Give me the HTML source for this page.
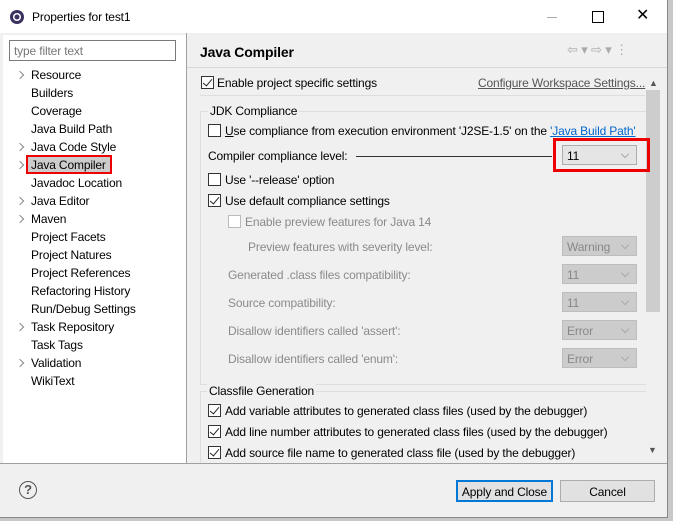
<!DOCTYPE html><html><head><style>
body{margin:0;width:673px;height:521px;background:#c8c8c8;font-family:"Liberation Sans",sans-serif;font-size:12px;letter-spacing:-0.15px;color:#000;position:relative;overflow:hidden}
.win{position:absolute;left:0;top:0;width:667px;height:517px;background:#f0f0f0;border-right:1px solid #888;border-bottom:1px solid #888}
.a{position:absolute;white-space:nowrap}
.tb{position:absolute;left:0;top:0;width:667px;height:33px;background:#fff}
.left{position:absolute;left:3px;top:35px;width:183px;height:428px;background:#fff}
.cb{position:absolute;width:11px;height:11px;border:1px solid #333;background:#fff}
.cb.c::after{content:"";position:absolute;left:3px;top:0px;width:4px;height:8px;border:solid #222;border-width:0 1.5px 1.5px 0;transform:rotate(40deg)}
.cb.d{border-color:#bbb}
.g{color:#8a8a8a}
.sel{position:absolute;width:72px;height:20px;background:#ccc;border:1px solid #bdbdbd;color:#888;box-sizing:border-box;padding:3px 0 0 4px}
.sel::after{content:"";position:absolute;right:8px;top:5px;width:5px;height:5px;border:solid #aaa;border-width:0 1px 1px 0;transform:rotate(45deg)}
.arr{position:absolute;left:17px;width:5px;height:5px;border:solid #888;border-width:1.5px 1.5px 0 0;transform:rotate(45deg)}
.btn{position:absolute;top:480px;height:22px;background:#e1e1e1;border:1px solid #adadad;box-sizing:border-box;text-align:center;padding-top:4px}
</style></head><body><div class="win">
<div class="tb"></div>
<svg class="a" style="left:9px;top:9px" width="16" height="16"><circle cx="8" cy="8" r="7" fill="#3a3160"/><circle cx="8" cy="8" r="4" fill="#fff"/><circle cx="8" cy="8" r="2.5" fill="#3a3160"/></svg>
<div class="a" style="left:32px;top:10px">Properties for test1</div>
<div class="a" style="left:547px;top:17px;width:10px;height:1px;background:#aaa"></div>
<div class="a" style="left:592px;top:11px;width:10px;height:10px;border:1px solid #000"></div>
<div class="a" style="left:636px;top:5px;font-size:16px">✕</div>
<div class="left"></div>
<div class="a" style="left:186px;top:33px;width:1px;height:431px;background:#a0a0a0"></div>
<div class="a" style="left:9px;top:40px;width:165px;height:19px;border:1px solid #7a7a7a;background:#fff"></div>
<div class="a g" style="left:14px;top:44px;color:#777">type filter text</div>
<div class="arr" style="top:72px"></div><div class="arr" style="top:144px"></div><div class="arr" style="top:162px"></div><div class="arr" style="top:198px"></div><div class="arr" style="top:216px"></div><div class="arr" style="top:324px"></div><div class="arr" style="top:360px"></div>
<div class="a" style="left:26px;top:155px;width:86px;height:19px;background:#ccc;border:2px solid #e00;box-sizing:border-box"></div>
<div class="a" style="left:31px;top:66px;line-height:18px">Resource<br>Builders<br>Coverage<br>Java Build Path<br>Java Code Style<br>Java Compiler<br>Javadoc Location<br>Java Editor<br>Maven<br>Project Facets<br>Project Natures<br>Project References<br>Refactoring History<br>Run/Debug Settings<br>Task Repository<br>Task Tags<br>Validation<br>WikiText</div>
<div class="a" style="left:200px;top:44px;font-size:14px;font-weight:bold">Java Compiler</div>
<div class="a" style="left:567px;top:42px;color:#aaa;font-size:13px">⇦ ▾ ⇨ ▾ ⋮</div>
<div class="a" style="left:187px;top:67px;width:480px;height:1px;background:#d8d8d8"></div>
<div class="cb c" style="left:201px;top:76px"></div>
<div class="a" style="left:217px;top:76px">Enable project specific settings</div>
<div class="a" style="left:478px;top:76px;color:#555;text-decoration:underline">Configure Workspace Settings...</div>
<div class="a" style="left:649px;top:78px;font-size:9px;color:#555">▲</div>
<div class="a" style="left:646px;top:90px;width:14px;height:222px;background:#cdcdcd"></div>
<div class="a" style="left:648px;top:445px;font-size:9px;color:#555">▼</div>
<div class="a" style="left:200px;top:95px;width:445px;height:1px;background:#ddd"></div>
<div class="a" style="left:200px;top:111px;width:445px;height:272px;border:1px solid #ddd;border-right:none"></div>
<div class="a" style="left:208px;top:104px;background:#f0f0f0;padding:0 2px">JDK Compliance</div>
<div class="cb" style="left:208px;top:124px"></div>
<div class="a" style="left:225px;top:124px"><u>U</u>se compliance from execution environment 'J2SE-1.5' on the <span style="color:#06c;text-decoration:underline">'Java Build Path'</span></div>
<div class="a" style="left:208px;top:149px">Compiler compliance level:</div>
<div class="a" style="left:356px;top:156px;width:196px;height:1px;background:#333"></div>
<div class="a" style="left:553px;top:138px;width:97px;height:34px;border:3px solid #e00;box-sizing:border-box"></div>
<div class="sel" style="left:562px;top:145px;width:75px;color:#000;background:#e5e5e5;border-color:#adadad">11</div>
<div class="cb" style="left:208px;top:173px"></div><div class="a" style="left:225px;top:173px">Use '--release' option</div>
<div class="cb c" style="left:208px;top:194px"></div><div class="a" style="left:225px;top:194px">Use default compliance settings</div>
<div class="cb d" style="left:228px;top:215px"></div><div class="a g" style="left:245px;top:215px">Enable preview features for Java 14</div>
<div class="a g" style="left:248px;top:240px">Preview features with severity level:</div>
<div class="a g" style="left:228px;top:268px">Generated .class files compatibility:</div>
<div class="a g" style="left:228px;top:296px">Source compatibility:</div>
<div class="a g" style="left:228px;top:324px">Disallow identifiers called 'assert':</div>
<div class="a g" style="left:228px;top:352px">Disallow identifiers called 'enum':</div>
<div class="sel" style="left:562px;top:236px;width:75px">Warning</div>
<div class="sel" style="left:562px;top:264px;width:75px">11</div>
<div class="sel" style="left:562px;top:292px;width:75px">11</div>
<div class="sel" style="left:562px;top:320px;width:75px">Error</div>
<div class="sel" style="left:562px;top:348px;width:75px">Error</div>
<div class="a" style="left:200px;top:391px;width:445px;height:72px;border-top:1px solid #ddd;border-left:1px solid #ddd"></div>
<div class="a" style="left:207px;top:384px;background:#f0f0f0;padding:0 2px">Classfile Generation</div>
<div class="cb c" style="left:208px;top:404px"></div><div class="a" style="left:225px;top:404px">Add variable attributes to generated class files (used by the debugger)</div>
<div class="cb c" style="left:208px;top:425px"></div><div class="a" style="left:225px;top:425px">Add line number attributes to generated class files (used by the debugger)</div>
<div class="cb c" style="left:208px;top:446px"></div><div class="a" style="left:225px;top:446px">Add source file name to generated class file (used by the debugger)</div>
<div class="a" style="left:0;top:463px;width:667px;height:1px;background:#a0a0a0"></div>
<div class="a" style="left:19px;top:481px;width:16px;height:16px;border:1.5px solid #555;border-radius:50%;text-align:center;font-weight:bold;color:#555;font-size:13px;line-height:16px">?</div>
<div class="btn" style="left:456px;width:97px;border:2px solid #0078d7;padding-top:3px">Apply and Close</div>
<div class="btn" style="left:560px;width:95px">Cancel</div>
</div></body></html>
